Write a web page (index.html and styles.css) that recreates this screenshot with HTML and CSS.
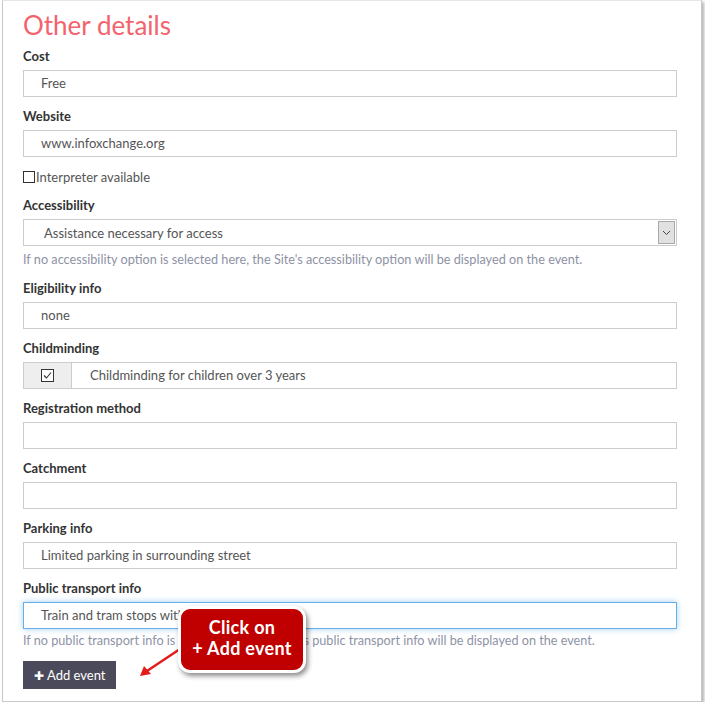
FILE: index.html
```html
<!DOCTYPE html>
<html>
<head>
<meta charset="utf-8">
<link rel="stylesheet" href="styles.css">
</head>
<body>
<div class="frame">
  <h2 class="title">Other details</h2>

  <div class="field">
    <div class="label">Cost</div>
    <div class="input">Free</div>
  </div>
  <div class="field">
    <div class="label">Website</div>
    <div class="input">www.infoxchange.org</div>
  </div>
  <div class="check-row">
    <span class="box"></span><span>Interpreter available</span>
  </div>
  <div class="field">
    <div class="label">Accessibility</div>
    <div class="select">
      <span class="select-text">Assistance necessary for access</span>
      <span class="select-btn">
        <svg width="9" height="6" viewBox="0 0 9 6"><path d="M1 1 L4.5 4.5 L8 1" fill="none" stroke="#444" stroke-width="1"/></svg>
      </span>
    </div>
    <div class="help">If no accessibility option is selected here, the Site's accessibility option will be displayed on the event.</div>
  </div>
  <div class="field">
    <div class="label">Eligibility info</div>
    <div class="input">none</div>
  </div>
  <div class="field">
    <div class="label">Childminding</div>
    <div class="group">
      <span class="addon">
        <svg width="13" height="13" viewBox="0 0 13 13"><rect x="0.5" y="0.5" width="12" height="12" fill="#fff" stroke="#333"/><path d="M3 6.5 L5.5 9 L10 3.5" fill="none" stroke="#333" stroke-width="1.1"/></svg>
      </span>
      <span class="group-text">Childminding for children over 3 years</span>
    </div>
  </div>
  <div class="field">
    <div class="label">Registration method</div>
    <div class="input"></div>
  </div>
  <div class="field">
    <div class="label">Catchment</div>
    <div class="input"></div>
  </div>
  <div class="field">
    <div class="label">Parking info</div>
    <div class="input">Limited parking in surrounding street</div>
  </div>
  <div class="field">
    <div class="label">Public transport info</div>
    <div class="input focus">Train and tram stops within walking distance</div>
    <div class="help help-last">If no public transport info is selected here, the Site's public transport info will be displayed on the event.</div>
  </div>
  <button class="btn"><span class="plus">&#10010;</span>Add event</button>

  <svg class="arrow" width="60" height="40" viewBox="0 0 60 40">
    <line x1="49" y1="6" x2="16" y2="28" stroke="#e41b1b" stroke-width="2.5"/>
    <path d="M9 33 L13 23 L20 31 Z" fill="#e41b1b"/>
  </svg>
  <div class="callout">Click on<br>+ Add event</div>
</div>
</body>
</html>
```

FILE: styles.css
```css
html, body {
  margin: 0;
  padding: 0;
  background: #ffffff;
}
body {
  font-family: "Lato", "Open Sans", sans-serif;
  font-size: 13px;
  color: #333;
}
.frame {
  position: relative;
  box-sizing: border-box;
  margin-left: 2px;
  width: 700px;
  height: 702px;
  border: 1px solid #c8c8c8;
  border-top-color: #e6e6e6;
  box-shadow: 2px 2px 3px rgba(0,0,0,0.3);
  padding: 9px 24px 0 20px;
  overflow: hidden;
}
.title {
  margin: 0 0 6px 0;
  font-size: 26px;
  line-height: 30px;
  font-weight: 400;
  color: #f2636d;
}
.field {
  margin-bottom: 9px;
}
.label {
  font-weight: 700;
  line-height: 20px;
  margin-bottom: 4px;
  color: #333;
}
.input {
  box-sizing: border-box;
  height: 27px;
  border: 1px solid #cccccc;
  padding-left: 17px;
  line-height: 25px;
  color: #555;
  white-space: nowrap;
  overflow: hidden;
}
.input.focus {
  border-color: #66afe9;
  box-shadow: 0 0 6px rgba(102,175,233,0.6);
}
.check-row {
  display: flex;
  align-items: center;
  height: 20px;
  margin: 10px 0 8px 0;
  color: #555;
}
.box {
  width: 10px;
  height: 10px;
  border: 1px solid #333;
  margin-right: 1px;
}
.select {
  box-sizing: border-box;
  height: 27px;
  border: 1px solid #cccccc;
  display: flex;
  align-items: center;
  justify-content: space-between;
  padding: 0 1px 0 20px;
  color: #555;
}
.select-btn {
  box-sizing: border-box;
  width: 17px;
  height: 23px;
  background: #e1e1e1;
  border: 1px solid #a9a9a9;
  display: flex;
  align-items: center;
  justify-content: center;
}
.help {
  margin-top: 3px;
  line-height: 20px;
  font-size: 12.7px;
  color: #8e92a5;
}
.help-last {
  margin-top: 2px;
  font-size: 12.65px;
}
.group {
  box-sizing: border-box;
  height: 27px;
  border: 1px solid #cccccc;
  display: flex;
  color: #555;
}
.addon {
  width: 47px;
  background: #eeeeee;
  border-right: 1px solid #cccccc;
  display: flex;
  align-items: center;
  justify-content: center;
}
.group-text {
  padding-left: 18px;
  line-height: 25px;
}
.btn {
  display: flex;
  align-items: center;
  margin-top: 10px;
  height: 28px;
  padding: 0 11px 0 11px;
  border: none;
  background: #4b4a5b;
  color: #fff;
  font-family: "Lato", "Open Sans", sans-serif;
  font-size: 13px;
}
.plus {
  font-size: 12px;
  margin-right: 3px;
}
.arrow {
  position: absolute;
  left: 128px;
  top: 642px;
}
.callout {
  position: absolute;
  left: 175px;
  top: 605px;
  box-sizing: border-box;
  width: 128px;
  height: 67px;
  background: #c00000;
  border: 3px solid #ffffff;
  border-radius: 12px;
  box-shadow: 2px 3px 5px rgba(0,0,0,0.45);
  color: #fff;
  font-weight: 700;
  font-size: 18px;
  letter-spacing: 0.3px;
  line-height: 21px;
  text-align: center;
  padding-top: 8px;
}
```
